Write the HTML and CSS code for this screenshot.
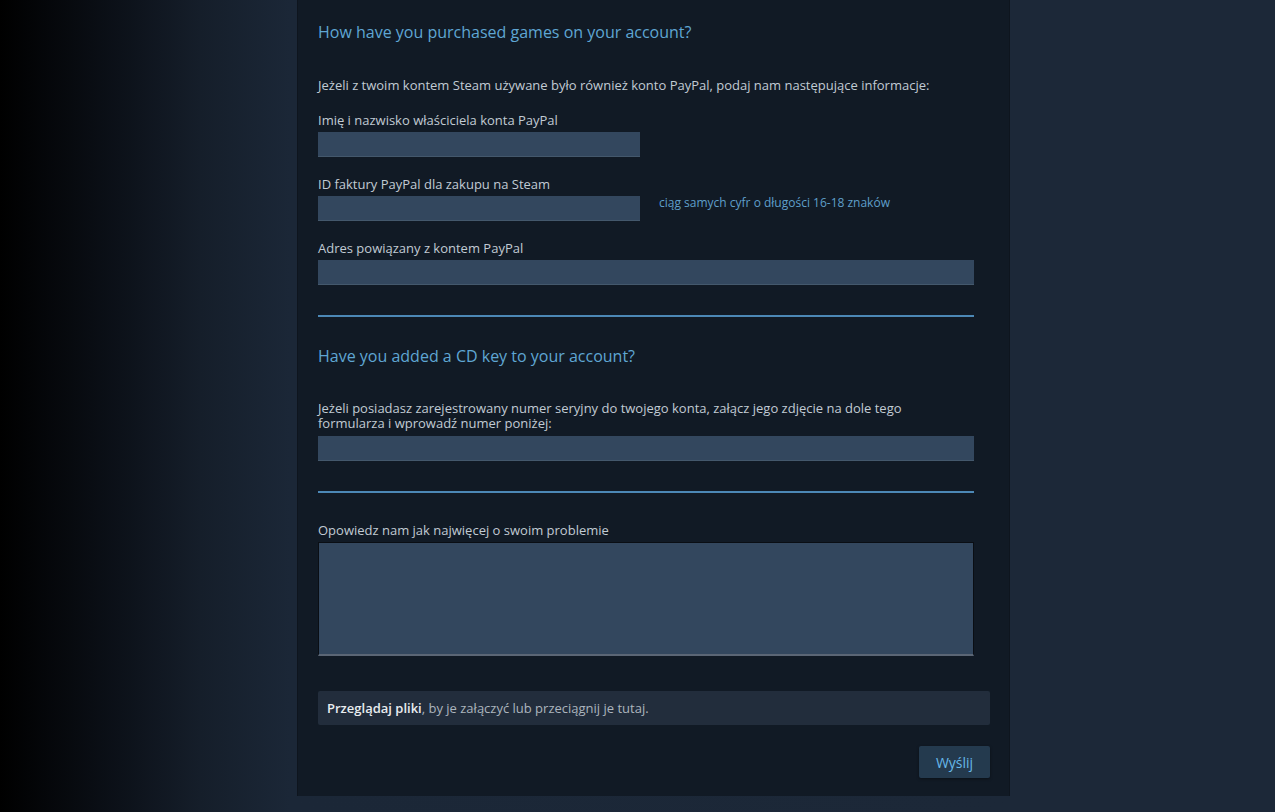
FILE: index.html
```html
<!DOCTYPE html>
<html lang="pl">
<head>
<meta charset="utf-8">
<title>Steam Support</title>
<link rel="stylesheet" href="styles.css">
</head>
<body>
<div class="page">
  <div class="panel">
    <h2 class="heading">How have you purchased games on your account?</h2>
    <p class="intro">Jeżeli z twoim kontem Steam używane było również konto PayPal, podaj nam następujące informacje:</p>

    <div class="field">
      <label class="label">Imię i nazwisko właściciela konta PayPal</label>
      <div class="row"><input class="input short" type="text"></div>
    </div>
    <div class="field">
      <label class="label">ID faktury PayPal dla zakupu na Steam</label>
      <div class="row"><input class="input short" type="text"><span class="hint">ciąg samych cyfr o długości 16-18 znaków</span></div>
    </div>
    <div class="field">
      <label class="label">Adres powiązany z kontem PayPal</label>
      <div class="row"><input class="input wide" type="text"></div>
    </div>

    <div class="sep"></div>

    <h2 class="heading">Have you added a CD key to your account?</h2>
    <p class="intro two">Jeżeli posiadasz zarejestrowany numer seryjny do twojego konta, załącz jego zdjęcie na dole tego formularza i wprowadź numer poniżej:</p>
    <div class="row"><input class="input wide" type="text"></div>

    <div class="sep"></div>

    <div class="field last">
      <label class="label">Opowiedz nam jak najwięcej o swoim problemie</label>
      <textarea class="textarea"></textarea>
    </div>

    <div class="upload"><b>Przeglądaj pliki</b>, by je załączyć lub przeciągnij je tutaj.</div>

    <div class="actions"><button class="btn" type="button">Wyślij</button></div>
  </div>
</div>
</body>
</html>
```
FILE: styles.css
```css
* { box-sizing: border-box; }
html, body { margin: 0; padding: 0; }
body {
  width: 1275px;
  height: 812px;
  overflow: hidden;
  background: linear-gradient(to right, #000000 0px, #0c1119 120px, #151e2a 200px, #1b2737 290px, #1c2838 1010px, #1c2838 100%);
  font-family: "Open Sans", "Liberation Sans", Arial, sans-serif;
  color: #c1cbd4;
}
.page { padding-left: 297px; }
.panel {
  width: 713px;
  height: 796px;
  background: #111a25;
  border-left: 1px solid #0e151e;
  border-right: 1px solid #0e151e;
  padding: 22px 20px 0 20px;
}
.heading {
  margin: 0;
  font-size: 16px;
  line-height: 20px;
  font-weight: normal;
  color: #5fa6d3;
}
.intro {
  margin: 35px 0 0 0;
  font-size: 13px;
  line-height: 16px;
  color: #c1cbd4;
}
.intro.two {
  margin-top: 35px;
  line-height: 15px;
  width: 620px;
  margin-bottom: 5px;
}
.field { margin-top: 19px; }
.label {
  display: block;
  font-size: 13px;
  line-height: 16px;
  margin-bottom: 4px;
  color: #c1cbd4;
}
.row { display: flex; align-items: center; }
.input {
  height: 25px;
  border: none;
  border-bottom: 1px solid #44586c;
  background: #33475e;
  padding: 0 6px;
  outline: none;
  color: #fff;
}
.input.short { width: 322px; }
.input.wide { width: 656px; }
.hint {
  margin-left: 19px;
  margin-top: -12px;
  font-size: 12px;
  color: #5f9fca;
}
.sep {
  width: 656px;
  height: 2px;
  background: #4c88b6;
  margin: 30px 0 29px 0;
}
.field.last { margin-top: 29px; }
.textarea {
  display: block;
  width: 656px;
  height: 114px;
  resize: none;
  background: #33475e;
  border: 1px solid #0a0e14;
  border-bottom: 2px solid #5b6675;
  outline: none;
  margin: 0;
}
.upload {
  margin-top: 35px;
  width: 672px;
  height: 34px;
  background: #222d3c;
  border-radius: 2px;
  padding: 0 9px;
  font-size: 13px;
  line-height: 34px;
  color: #acb5be;
}
.upload b { color: #e8ecef; font-weight: 600; }
.actions {
  width: 672px;
  display: flex;
  justify-content: flex-end;
  margin-top: 21px;
}
.btn {
  width: 71px;
  height: 32px;
  border: none;
  border-radius: 2px;
  background: #243a4e;
  color: #66b8e8;
  font-family: "Open Sans", "Liberation Sans", Arial, sans-serif;
  font-size: 14px;
  box-shadow: 0 1px 3px rgba(0,0,0,0.4);
  padding: 0;
}
```
